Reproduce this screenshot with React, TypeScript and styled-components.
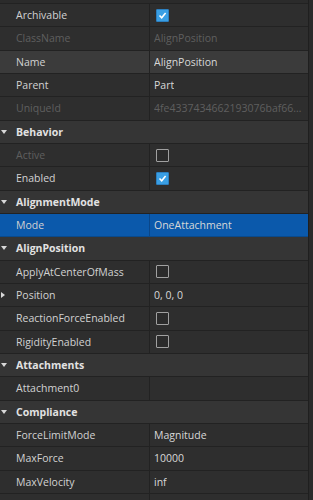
import React from 'react';
import styled, { createGlobalStyle, css } from 'styled-components';

const GlobalStyle = createGlobalStyle`
  html, body {
    margin: 0;
    padding: 0;
    background: #2e2e2e;
    font-family: 'Open Sans', 'Noto Sans', sans-serif;
    font-size: 10.5px;
    overflow: hidden;
  }
`;

const Panel = styled.div`
  display: flex;
  width: 313px;
  height: 500px;
  overflow: hidden;
`;

const Grid = styled.div`
  flex: 1;
  display: flex;
  flex-direction: column;
  border-right: 1px solid #1f1f1f;
`;

const ScrollTrack = styled.div`
  width: 4px;
  background: #2a2a2a;
`;

const TopSliver = styled.div`
  height: 4px;
  flex-shrink: 0;
  box-sizing: border-box;
  background: #2b2b2b;
  border-bottom: 1px solid #222;
`;

const Row = styled.div<{ $state?: 'hover' | 'selected' }>`
  display: grid;
  grid-template-columns: 150px 1fr;
  height: calc(70px / 3);
  flex-shrink: 0;
  box-sizing: border-box;
  border-bottom: 1px solid #222;
  background: #2e2e2e;
  ${p => p.$state === 'hover' && css`background: #3b3b3b;`}
  ${p => p.$state === 'selected' && css`background: #0b59ab; border-bottom-color: #0a4a8c;`}
`;

const NameCell = styled.div<{ $muted?: boolean; $selected?: boolean }>`
  position: relative;
  display: flex;
  align-items: center;
  padding-left: 16px;
  box-sizing: border-box;
  border-right: 1px solid ${p => (p.$selected ? '#0a4688' : '#222')};
  color: ${p => (p.$muted ? '#5f5f5f' : '#d2d2d2')};
  white-space: nowrap;
  overflow: hidden;
`;

const ValueCell = styled.div<{ $muted?: boolean }>`
  display: flex;
  align-items: center;
  padding-left: 4px;
  padding-right: 4px;
  min-width: 0;
  color: ${p => (p.$muted ? '#5f5f5f' : '#d8d8d8')};
`;

const ValueText = styled.span`
  white-space: nowrap;
  overflow: hidden;
  text-overflow: ellipsis;
`;

const Header = styled.div`
  position: relative;
  display: flex;
  align-items: center;
  height: calc(70px / 3);
  flex-shrink: 0;
  box-sizing: border-box;
  padding-left: 16px;
  background: #353535;
  border-bottom: 1px solid #222;
  color: #e2e2e2;
  font-weight: 700;
`;

const DownArrow = styled.span`
  position: absolute;
  left: 1px;
  top: 50%;
  margin-top: -2px;
  width: 0;
  height: 0;
  border-left: 3px solid transparent;
  border-right: 3px solid transparent;
  border-top: 4px solid #d8d8d8;
`;

const RightArrow = styled.span`
  position: absolute;
  left: 1px;
  top: 50%;
  margin-top: -3px;
  width: 0;
  height: 0;
  border-top: 3px solid transparent;
  border-bottom: 3px solid transparent;
  border-left: 4px solid #d8d8d8;
`;

const Box = styled.span<{ $checked?: boolean }>`
  display: inline-flex;
  align-items: center;
  justify-content: center;
  width: 13px;
  height: 13px;
  margin-left: 2px;
  box-sizing: border-box;
  border-radius: 1px;
  ${p =>
    p.$checked
      ? css`background: #3a9fe4; border: 1px solid #2c7fbf;`
      : css`background: #2b2b2b; border: 1px solid #a0a0a0;`}
`;

const Checkbox = ({ checked }: { checked?: boolean }) => (
  <Box $checked={checked}>
    {checked && (
      <svg width='9' height='9' viewBox='0 0 9 9'>
        <path d='M1.5 4.5 L3.7 6.7 L7.6 2' fill='none' stroke='#fff' strokeWidth='1.6' />
      </svg>
    )}
  </Box>
);

type Prop =
  | { kind: 'header'; name: string }
  | {
      kind: 'prop';
      name: string;
      value?: string;
      check?: boolean;
      muted?: boolean;
      state?: 'hover' | 'selected';
      expand?: boolean;
    };

const props: Prop[] = [
  { kind: 'prop', name: 'Archivable', check: true },
  { kind: 'prop', name: 'ClassName', value: 'AlignPosition', muted: true },
  { kind: 'prop', name: 'Name', value: 'AlignPosition', state: 'hover' },
  { kind: 'prop', name: 'Parent', value: 'Part' },
  { kind: 'prop', name: 'UniqueId', value: '4fe4337434662193076baf6621a5c7e0', muted: true },
  { kind: 'header', name: 'Behavior' },
  { kind: 'prop', name: 'Active', check: false, muted: true },
  { kind: 'prop', name: 'Enabled', check: true },
  { kind: 'header', name: 'AlignmentMode' },
  { kind: 'prop', name: 'Mode', value: 'OneAttachment', state: 'selected' },
  { kind: 'header', name: 'AlignPosition' },
  { kind: 'prop', name: 'ApplyAtCenterOfMass', check: false },
  { kind: 'prop', name: 'Position', value: '0, 0, 0', expand: true },
  { kind: 'prop', name: 'ReactionForceEnabled', check: false },
  { kind: 'prop', name: 'RigidityEnabled', check: false },
  { kind: 'header', name: 'Attachments' },
  { kind: 'prop', name: 'Attachment0', value: '' },
  { kind: 'header', name: 'Compliance' },
  { kind: 'prop', name: 'ForceLimitMode', value: 'Magnitude' },
  { kind: 'prop', name: 'MaxForce', value: '10000' },
  { kind: 'prop', name: 'MaxVelocity', value: 'inf' },
  { kind: 'prop', name: 'Responsiveness', value: '10' },
];

const App = () => (
  <>
    <GlobalStyle />
    <Panel>
      <Grid>
        <TopSliver />
        {props.map(p =>
          p.kind === 'header' ? (
            <Header key={p.name}>
              <DownArrow />
              {p.name}
            </Header>
          ) : (
            <Row key={p.name} $state={p.state}>
              <NameCell $muted={p.muted} $selected={p.state === 'selected'}>
                {p.expand && <RightArrow />}
                {p.name}
              </NameCell>
              <ValueCell $muted={p.muted}>
                {p.check !== undefined ? <Checkbox checked={p.check} /> : <ValueText>{p.value}</ValueText>}
              </ValueCell>
            </Row>
          )
        )}
      </Grid>
      <ScrollTrack />
    </Panel>
  </>
);

export default App;
